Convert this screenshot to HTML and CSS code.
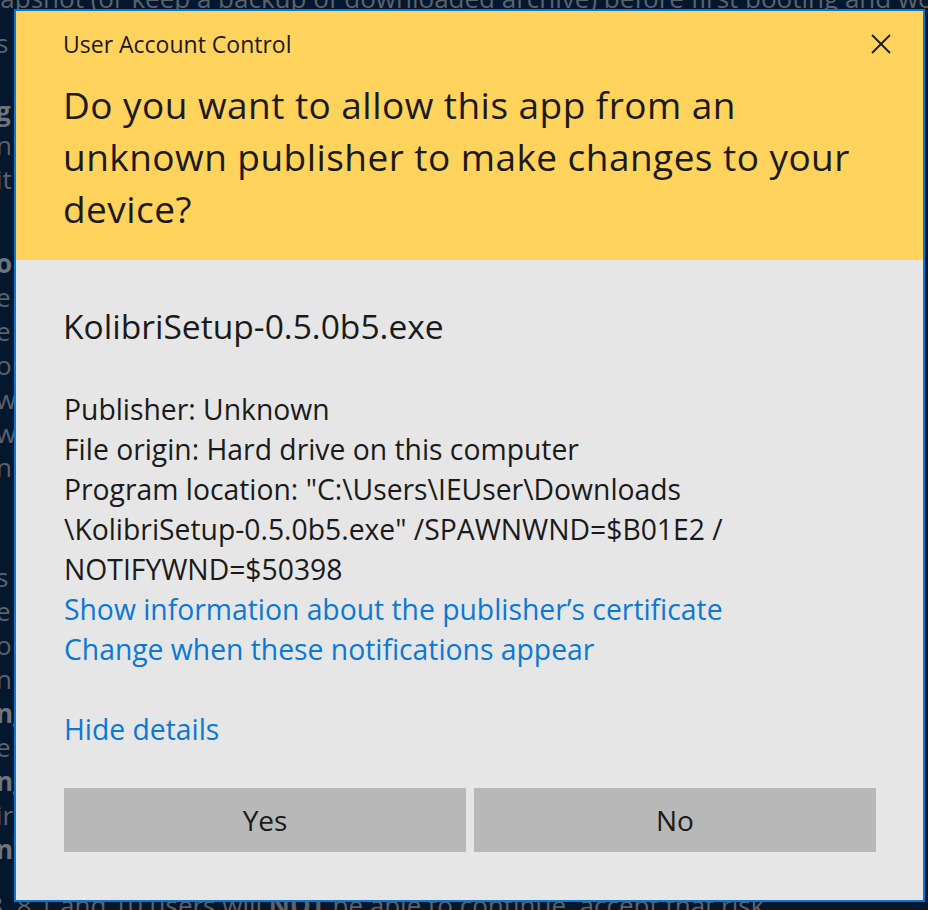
FILE: index.html
```html
<!DOCTYPE html>
<html>
<head>
<meta charset="utf-8">
<link rel="stylesheet" href="styles.css">
</head>
<body>
<div class="backdrop">
  <p class="bg-top">snapshot (or keep a backup of downloaded archive) before first booting and working with it.</p>
  <div class="bg-group group-a">
    <p>s the VM</p>
    <p>&nbsp;</p>
    <p class="bold">g Setting</p>
    <p>n the</p>
    <p>it the</p>
  </div>
  <div class="bg-group group-b">
    <p class="bold">o Option</p>
    <p>e the</p>
    <p>e to</p>
    <p>o the</p>
    <p>w the</p>
    <p>w the</p>
    <p>n the</p>
  </div>
  <div class="bg-group group-c">
    <p>s the</p>
    <p>e the</p>
    <p>o the</p>
    <p>n the</p>
    <p class="bold">ng the</p>
    <p>e the</p>
    <p class="bold">ng the</p>
    <p>ir the</p>
    <p class="bold">n the</p>
  </div>
  <p class="bg-bottom">Windows 8, 8.1 and 10 users will <b>NOT</b> be able to continue, accept that risk</p>
</div>

<div class="dialog">
  <header class="head">
    <div class="head-top">
      <span class="caption">User Account Control</span>
      <span class="close" aria-label="Close">
        <svg width="20" height="20" viewBox="0 0 20 20"><path d="M1 1 L19 19 M19 1 L1 19" stroke="#1a1a1a" stroke-width="1.8" fill="none"/></svg>
      </span>
    </div>
    <h1 class="question">Do you want to allow this app from an<br>unknown publisher to make changes to your<br>device?</h1>
  </header>
  <main class="body">
    <div class="filename">KolibriSetup-0.5.0b5.exe</div>
    <div class="details">
      <div>Publisher: Unknown</div>
      <div>File origin: Hard drive on this computer</div>
      <div>Program location: "C:\Users\IEUser\Downloads<br>\KolibriSetup-0.5.0b5.exe" /SPAWNWND=$B01E2 /<br>NOTIFYWND=$50398</div>
      <a class="link" href="#">Show information about the publisher’s certificate</a>
      <a class="link" href="#">Change when these notifications appear</a>
    </div>
    <a class="link hide" href="#">Hide details</a>
    <div class="buttons">
      <button class="btn">Yes</button>
      <button class="btn">No</button>
    </div>
  </main>
</div>
</body>
</html>
```

FILE: styles.css
```css
html, body {
  margin: 0;
  padding: 0;
  height: 100%;
}
body {
  background: #03182f;
  font-family: "Open Sans", "Noto Sans", sans-serif;
  overflow: hidden;
  position: relative;
}
.backdrop {
  color: #5b626c;
  font-size: 26px;
  margin-left: -4px;
}
.backdrop p {
  margin: 0;
  line-height: 34px;
  white-space: nowrap;
}
.bg-top {
  margin-top: -19px !important;
  margin-left: -24px !important;
}
.bold { font-weight: 700; color: #6e747c; }
.group-a { margin-top: 11px; }
.group-b { margin-top: 50px; }
.group-c { margin-top: 76px; }
.bg-bottom {
  margin-top: 22px !important;
  margin-left: -125px !important;
}

.dialog {
  position: absolute;
  left: 14px;
  top: 9px;
  width: 907px;
  height: 889px;
  border: 2px solid #0878d6;
  background: #e6e6e6;
  display: flex;
  flex-direction: column;
  color: #1a1a1a;
}
.head {
  background: #ffd35c;
  height: 249px;
  box-sizing: border-box;
  padding: 19px 0 0 47px;
}
.head-top {
  display: flex;
  justify-content: space-between;
  align-items: center;
  padding-right: 32px;
}
.caption {
  font-size: 23px;
  line-height: 28px;
}
.close {
  display: flex;
  width: 20px;
  height: 20px;
}
.question {
  margin: 21px 0 0 0;
  font-weight: 400;
  font-size: 37px;
  letter-spacing: 0.45px;
  line-height: 52px;
}
.body {
  flex: 1;
  padding: 46px 47px 0 48px;
  display: flex;
  flex-direction: column;
}
.filename {
  font-size: 33.6px;
  line-height: 40px;
  margin-left: -1px;
}
.details {
  margin-top: 43px;
  font-size: 28.3px;
  line-height: 40px;
  display: flex;
  flex-direction: column;
}
.link {
  color: #0a78d6;
  text-decoration: none;
  font-size: 28.3px;
  line-height: 40px;
}
.hide {
  margin-top: 40px;
}
.buttons {
  margin-top: 39px;
  display: grid;
  grid-template-columns: 1fr 1fr;
  gap: 8px;
  width: 812px;
}
.btn {
  height: 64px;
  border: none;
  background: #b8b8b8;
  font-family: inherit;
  font-size: 28px;
  color: #1a1a1a;
  padding: 0;
}
```
